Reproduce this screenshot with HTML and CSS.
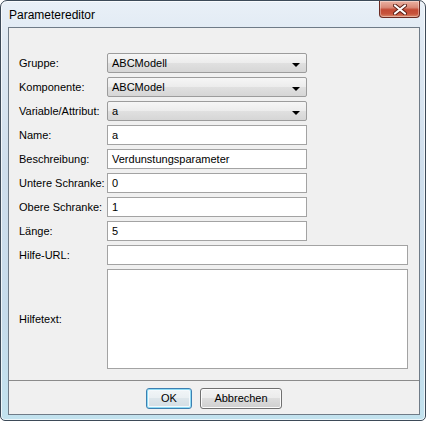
FILE: index.html
```html
<!DOCTYPE html>
<html>
<head>
<meta charset="utf-8">
<link rel="stylesheet" href="styles.css">
</head>
<body>
<div class="window">
  <div class="titlebar">
    <span class="title">Parametereditor</span>
    <div class="close">
      <svg width="14" height="11" viewBox="0 0 14 11">
        <path d="M2 1.5 L12 9.5 M12 1.5 L2 9.5" stroke="#5a1e14" stroke-width="4" stroke-linecap="round"/>
        <path d="M2 1.5 L12 9.5 M12 1.5 L2 9.5" stroke="#ffffff" stroke-width="2.2" stroke-linecap="round"/>
      </svg>
    </div>
  </div>
  <div class="client">
    <div class="form">
      <label>Gruppe:</label>
      <div class="combo"><span>ABCModell</span><i class="arrow"></i></div>
      <label>Komponente:</label>
      <div class="combo"><span>ABCModel</span><i class="arrow"></i></div>
      <label>Variable/Attribut:</label>
      <div class="combo"><span>a</span><i class="arrow"></i></div>
      <label>Name:</label>
      <div class="field">a</div>
      <label>Beschreibung:</label>
      <div class="field">Verdunstungsparameter</div>
      <label>Untere Schranke:</label>
      <div class="field">0</div>
      <label>Obere Schranke:</label>
      <div class="field">1</div>
      <label>Länge:</label>
      <div class="field">5</div>
      <label>Hilfe-URL:</label>
      <div class="field wide"></div>
      <label>Hilfetext:</label>
      <div class="field wide area"></div>
    </div>
    <div class="buttons">
      <div class="btn default">OK</div>
      <div class="btn">Abbrechen</div>
    </div>
  </div>
</div>
</body>
</html>
```
FILE: styles.css
```css
html, body {
  margin: 0;
  padding: 0;
  background: #ffffff;
}
body {
  font-family: "Liberation Sans", Arial, sans-serif;
  font-size: 11px;
  color: #000;
}
.window {
  width: 426px;
  height: 421px;
  box-sizing: border-box;
  border: 1px solid #3d4a58;
  border-radius: 7px 7px 5px 5px;
  padding: 0 5px 5px 7px;
  background: linear-gradient(to bottom, #e9f0f7 0%, #dfe9f3 10%, #cfdeec 40%, #c6dbeb 75%, #c2e2ee 100%);
  box-shadow: inset 0 0 0 1px rgba(255,255,255,0.7);
}
.titlebar {
  height: 26px;
  display: flex;
  justify-content: space-between;
  align-items: flex-start;
}
.title {
  font-size: 12px;
  line-height: 12px;
  margin-top: 8px;
  margin-left: 1px;
  color: #000;
}
.close {
  width: 41px;
  height: 17px;
  box-sizing: border-box;
  border: 1px solid #6b2b22;
  border-top: none;
  border-radius: 0 0 4px 4px;
  background: linear-gradient(to bottom, #ebb2a2 0%, #d98a78 40%, #c34a34 55%, #c7543c 80%, #dc8a6c 100%);
  display: flex;
  align-items: center;
  justify-content: center;
  box-shadow: inset 0 0 0 1px rgba(255,255,255,0.35);
}
.close svg { display: block; }
.client {
  width: 412px;
  height: 388px;
  box-sizing: border-box;
  border: 1px solid #6f7b87;
  background: #f0f0f0;
  display: flex;
  flex-direction: column;
}
.form {
  height: 352px;
  box-sizing: border-box;
  padding: 25px 0 0 10px;
  display: grid;
  grid-template-columns: 88px auto;
  grid-auto-rows: auto;
  align-content: start;
  row-gap: 4px;
  align-items: center;
  justify-items: start;
}
.form label {
  line-height: 13px;
  white-space: nowrap;
}
.combo {
  width: 200px;
  height: 20px;
  box-sizing: border-box;
  border: 1px solid #9c9c9c;
  border-radius: 2px;
  background: linear-gradient(to bottom, #f6f6f6 0%, #ececec 50%, #e0e0e0 51%, #d6d6d6 100%);
  display: flex;
  align-items: center;
  justify-content: space-between;
  padding: 0 6px 0 4px;
}
.combo span { line-height: 13px; }
.arrow {
  width: 0;
  height: 0;
  border-left: 4px solid transparent;
  border-right: 4px solid transparent;
  border-top: 4px solid #000;
  margin-top: 3px;
}
.field {
  width: 200px;
  height: 20px;
  box-sizing: border-box;
  border: 1px solid #a3a3a3;
  background: #fff;
  padding: 0 4px;
  line-height: 18px;
}
.field.wide { width: 301px; }
.field.area { height: 100px; }
.buttons {
  flex: 1;
  border-top: 1px solid #8b8b8b;
  display: flex;
  justify-content: center;
  align-items: center;
  gap: 8px;
  padding-top: 1px;
}
.btn {
  height: 21px;
  box-sizing: border-box;
  border: 1px solid #707070;
  border-radius: 3px;
  background: linear-gradient(to bottom, #f2f2f2 0%, #ebebeb 49%, #dddddd 50%, #cfcfcf 100%);
  box-shadow: inset 0 0 0 1px #fbfbfb;
  display: flex;
  align-items: center;
  justify-content: center;
  width: 82px;
}
.btn.default {
  width: 46px;
  border-color: #3c7fb1;
  box-shadow: inset 0 0 0 1px #8fdcf5, inset 0 0 0 2px #f4f9fc;
  background: linear-gradient(to bottom, #f2f6f8 0%, #e9eff2 49%, #dde6eb 50%, #d3dde3 100%);
}
```
